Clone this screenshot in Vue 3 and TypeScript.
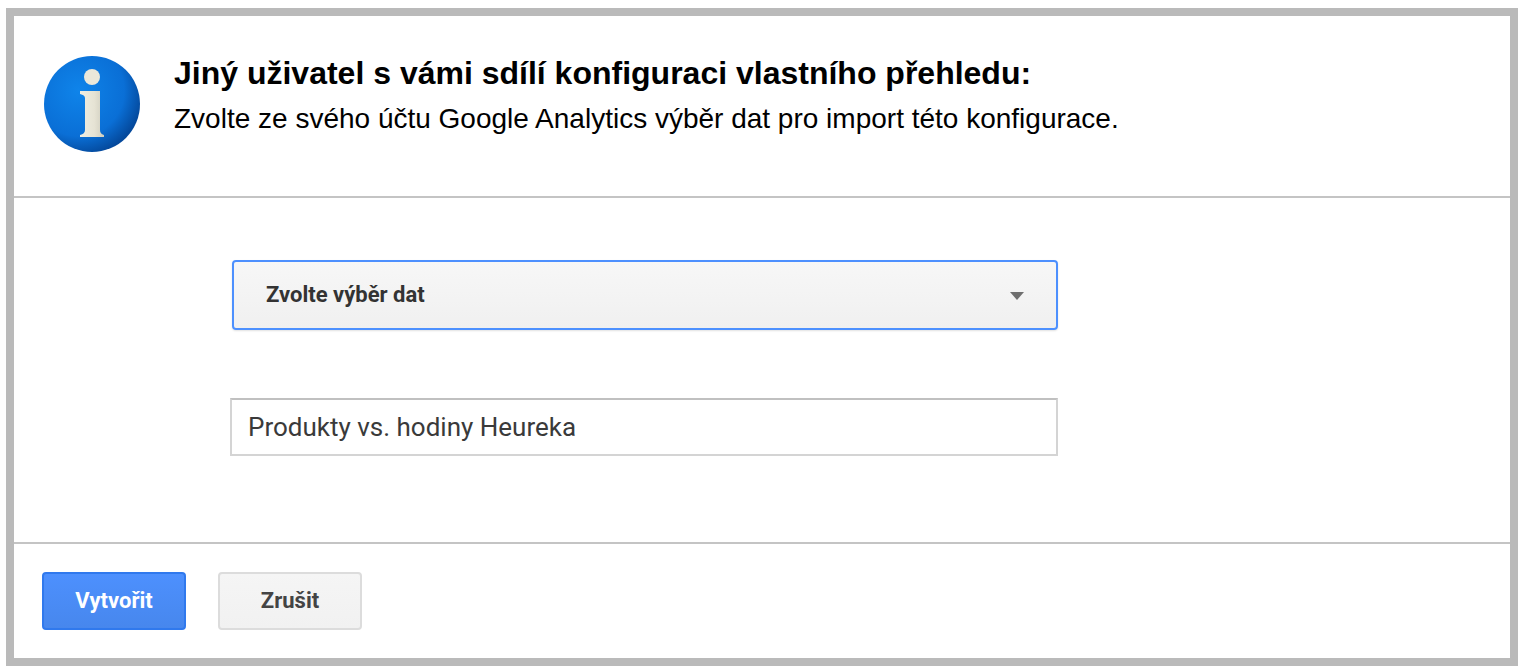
<script setup lang="ts">
const title: string = 'Jiný uživatel s vámi sdílí konfiguraci vlastního přehledu:'
const subtitle: string = 'Zvolte ze svého účtu Google Analytics výběr dat pro import této konfigurace.'
</script>

<template>
  <div class="page">
    <div class="frame">
      <header class="head">
        <svg class="info" width="96" height="96" viewBox="0 0 96 96" aria-hidden="true">
          <defs>
            <radialGradient id="ball" cx="36%" cy="36%" r="68%">
              <stop offset="0" stop-color="#0f84ea" />
              <stop offset="0.7" stop-color="#0a6fd6" />
              <stop offset="1" stop-color="#04499c" />
            </radialGradient>
            <linearGradient id="stem" x1="0" y1="0" x2="1" y2="0">
              <stop offset="0" stop-color="#f0eee2" />
              <stop offset="0.6" stop-color="#e6e3d4" />
              <stop offset="1" stop-color="#cfcdbe" />
            </linearGradient>
          </defs>
          <circle cx="48" cy="48" r="48" fill="url(#ball)" />
          <circle cx="48" cy="21" r="8" fill="#ebe8da" />
          <path d="M36 35 H56 V74 Q56 78 60 79 V81 H36 V79 Q41 78 41 74 V42 Q41 39 36 38 Z" fill="url(#stem)" />
        </svg>
        <div class="copy">
          <h1>{{ title }}</h1>
          <p>{{ subtitle }}</p>
        </div>
      </header>

      <main class="body">
        <div class="select">
          <span class="select-label">Zvolte výběr dat</span>
          <i class="caret"></i>
        </div>
        <div class="field">Produkty vs. hodiny Heureka</div>
      </main>

      <footer class="foot">
        <button class="btn primary" type="button">Vytvořit</button>
        <button class="btn" type="button">Zrušit</button>
      </footer>
    </div>
  </div>
</template>

<style>
html, body { margin: 0; background: #fff; }
</style>

<style scoped>
.page {
  width: 1524px;
  height: 672px;
  padding: 8px 6px 6px;
  box-sizing: border-box;
}
.frame {
  height: 658px;
  box-sizing: border-box;
  border: 8px solid #bababa;
  display: flex;
  flex-direction: column;
}
.head {
  height: 182px;
  box-sizing: border-box;
  border-bottom: 2px solid #c4c4c4;
  padding: 40px 0 0 30px;
  display: flex;
  align-items: flex-start;
  gap: 34px;
}
.info { flex: none; }
.copy { font-family: "Liberation Sans", Arial, sans-serif; color: #000; }
h1 { margin: 0; font-size: 32px; line-height: 35px; font-weight: 700; }
p { margin: 12px 0 0; font-size: 28px; line-height: 32px; }
.body {
  flex: 1;
  border-bottom: 2px solid #c4c4c4;
  padding: 62px 0 0 216px;
  font-family: Roboto, "Liberation Sans", sans-serif;
  display: flex;
  flex-direction: column;
  align-items: flex-start;
}
.select {
  width: 826px;
  height: 70px;
  margin-left: 2px;
  box-sizing: border-box;
  border: 2px solid #4d90fe;
  border-radius: 4px;
  background: linear-gradient(#f7f7f7, #f0f0f0);
  box-shadow: 0 1px 2px rgba(0, 0, 0, 0.12);
  padding: 0 32px;
  display: flex;
  align-items: center;
  justify-content: space-between;
  font-size: 22px;
  font-weight: 700;
  color: #333;
}
.select-label { padding-bottom: 2px; }
.caret {
  width: 0;
  height: 0;
  margin-top: 2px;
  border-left: 7px solid transparent;
  border-right: 7px solid transparent;
  border-top: 8px solid #6f6f6f;
}
.field {
  width: 828px;
  height: 58px;
  margin-top: 68px;
  box-sizing: border-box;
  border: 2px solid #d4d4d4;
  border-top-color: #c0c0c0;
  padding: 0 16px;
  display: flex;
  align-items: center;
  font-size: 26px;
  color: #3a3a3a;
}
.foot {
  height: 114px;
  box-sizing: border-box;
  padding: 28px 0 0 28px;
  display: flex;
  align-items: flex-start;
  gap: 32px;
}
.btn {
  width: 144px;
  height: 58px;
  box-sizing: border-box;
  border: 2px solid #dcdcdc;
  border-radius: 4px;
  background: linear-gradient(#f5f5f5, #f1f1f1);
  font-family: Roboto, "Liberation Sans", sans-serif;
  font-size: 22px;
  font-weight: 700;
  color: #444;
  padding: 0 0 2px;
}
.primary {
  border-color: #3079ed;
  background: linear-gradient(#4d90fe, #4787ed);
  color: #fff;
}
</style>
